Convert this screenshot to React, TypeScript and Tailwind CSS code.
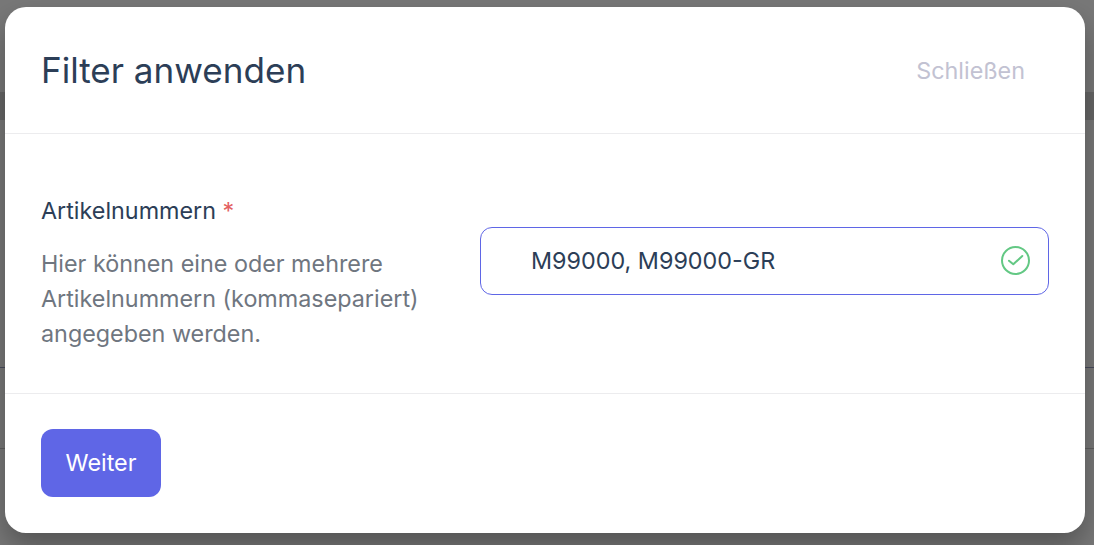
export default function App() {
  return (
    <div className="relative h-[545px] w-[1094px] overflow-hidden bg-[#787878] font-['Inter',sans-serif]">
      <div className="absolute inset-x-0 top-[92px] h-[28px] bg-[#666666]" />
      <div className="absolute inset-x-0 top-[367px] h-px bg-[#484b5c]" />
      <div className="absolute inset-x-0 top-[448px] h-px bg-[#5f5f5f]" />
      <div className="relative ml-[5px] mt-[7px] flex h-[526px] w-[1080px] flex-col rounded-[21px] bg-white shadow-[0_14px_28px_rgba(0,0,0,0.3)]">
        <header className="flex h-[127px] items-center justify-between border-b border-[#ececee] pl-[36px] pr-[60px]">
          <h2 className="mt-[2px] text-[35.1px] leading-none text-[#2c3e57]">Filter anwenden</h2>
          <span className="mt-[2px] text-[23.33px] text-[#c2c2d2]">Schließen</span>
        </header>
        <main className="flex h-[260px] border-b border-[#ececee] pl-[36px] pr-[36px] pt-[59px]">
          <div className="w-[439px]">
            <div className="text-[23.33px] leading-[35px] text-[#2c3e57]">Artikelnummern <span className="text-[#e3605f]">*</span></div>
            <p className="mt-[18px] text-[23.33px] leading-[35px] text-[#6f7680]">Hier können eine oder mehrere<br />Artikelnummern (kommasepariert)<br />angegeben werden.</p>
          </div>
          <div className="mt-[34px] flex h-[68px] w-[569px] items-center justify-between rounded-[12px] border border-[#5f66e6] pl-[50px] pr-[17px]">
            <span className="text-[23.33px] text-[#2c3e57]">M99000, M99000-GR</span>
            <svg width="30" height="30" viewBox="0 0 30 30" fill="none" stroke="#63c884" strokeWidth="2"><circle cx="14.5" cy="14.5" r="13.5" /><path d="M8 14.7l4.3 3.6 9-8.3" strokeLinecap="round" strokeLinejoin="round" /></svg>
          </div>
        </main>
        <footer className="pl-[36px] pt-[35px]">
          <button className="h-[68px] w-[120px] rounded-[12px] bg-[#5f66e6] text-[23.33px] text-white">Weiter</button>
        </footer>
      </div>
    </div>
  );
}
